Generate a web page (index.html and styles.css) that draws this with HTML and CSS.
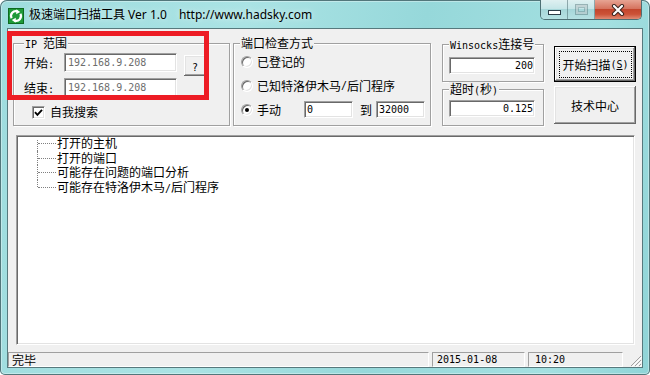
FILE: index.html
```html
<!DOCTYPE html>
<html lang="zh-CN">
<head>
    <meta charset="UTF-8">
    <title>极速端口扫描工具 Ver 1.0</title>
    <link rel="stylesheet" href="styles.css">
</head>
<body>
    <div class="window">
        <div class="titlebar">
            <svg class="app-icon" width="16" height="16" viewBox="0 0 16 16">
                <rect x="0.5" y="0.5" width="15" height="15" fill="#1e9a38" stroke="#0d6a20"/>
                <path d="M3.6 10.2 A4.8 4.8 0 0 1 9.4 3.4" fill="none" stroke="#fff" stroke-width="2.2"/>
                <path d="M8.4 1.3 L12.2 4 L8.2 6.2 Z" fill="#fff"/>
                <path d="M12.4 5.8 A4.8 4.8 0 0 1 6.6 12.6" fill="none" stroke="#fff" stroke-width="2.2"/>
                <path d="M7.6 14.7 L3.8 12 L7.8 9.8 Z" fill="#fff"/>
            </svg>
            <div class="title">极速端口扫描工具 Ver 1.0<span class="title-url">http://www.hadsky.com</span></div>
            <div class="caption">
                <div class="cap-btn cap-min"><span class="min-glyph"></span></div>
                <div class="cap-btn cap-max"><span class="max-glyph"></span></div>
                <div class="cap-btn cap-close">
                    <svg width="14" height="12" viewBox="0 0 14 12">
                        <path d="M3 2 L11 10 M11 2 L3 10" stroke="#3b2620" stroke-width="4.2" stroke-linecap="round"/>
                        <path d="M3 2 L11 10 M11 2 L3 10" stroke="#fff" stroke-width="2.2" stroke-linecap="round"/>
                    </svg>
                </div>
            </div>
        </div>

        <div class="client">
            <div class="top-row">
                <div class="group group-ip">
                    <span class="legend"><span class="en">IP </span>范围</span>
                    <div class="field-row">
                        <span class="field-label">开始<span class="en">:</span></span>
                        <input class="edit ip" value="192.168.9.208" readonly>
                        <button class="btn btn-help"><span class="en">?</span></button>
                    </div>
                    <div class="field-row">
                        <span class="field-label">结束<span class="en">:</span></span>
                        <input class="edit ip" value="192.168.9.208" readonly>
                    </div>
                    <div class="check-row">
                        <span class="check-box">
                            <svg width="9" height="9" viewBox="0 0 9 9">
                                <polyline points="1,4.2 3.4,6.8 8,1.8" fill="none" stroke="#000" stroke-width="1.9"/>
                            </svg>
                        </span>
                        <span class="check-text">自我搜索</span>
                    </div>
                </div>

                <div class="group group-port">
                    <span class="legend">端口检查方式</span>
                    <div class="radio-row"><span class="radio"></span>已登记的</div>
                    <div class="radio-row"><span class="radio"></span>已知特洛伊木马<span class="en">/</span>后门程序</div>
                    <div class="radio-row">
                        <span class="radio"><span class="radio-dot"></span></span>手动
                        <input class="edit port port-from" value="0">
                        <span class="port-to">到</span>
                        <input class="edit port" value="32000">
                    </div>
                </div>

                <div class="col-net">
                    <div class="group group-winsock">
                        <span class="legend"><span class="en">Winsocks</span>连接号</span>
                        <input class="edit num" value="200">
                    </div>
                    <div class="group group-timeout">
                        <span class="legend">超时<span class="en">(</span>秒<span class="en">)</span></span>
                        <input class="edit num" value="0.125">
                    </div>
                </div>

                <div class="col-btn">
                    <button class="btn btn-default"><span class="focus-ring">开始扫描<span class="en">(<u>S</u>)</span></span></button>
                    <button class="btn btn-tech">技术中心</button>
                </div>
            </div>

            <div class="tree">
                <div class="tree-item">打开的主机</div>
                <div class="tree-item">打开的端口</div>
                <div class="tree-item">可能存在问题的端口分析</div>
                <div class="tree-item">可能存在特洛伊木马<span class="en">/</span>后门程序</div>
            </div>

            <div class="statusbar">
                <div class="panel panel-msg">完毕</div>
                <div class="panel panel-date en">2015-01-08</div>
                <div class="panel panel-time en">10:20</div>
                <svg class="grip" width="12" height="12" viewBox="0 0 12 12">
                    <path d="M11 1 L1 11 M11 5 L5 11 M11 9 L9 11" stroke="#a0a0a0" stroke-width="1"/>
                    <path d="M12 2 L2 12 M12 6 L6 12 M12 10 L10 12" stroke="#fff" stroke-width="1"/>
                </svg>
            </div>
        </div>

        <div class="mark"></div>
    </div>
</body>
</html>
```

FILE: styles.css
```css
* {
    box-sizing: border-box;
}
body {
    margin: 0;
    background: #fff;
    color: #000;
    font-family: "Noto Sans CJK SC", sans-serif;
    font-size: 12px;
}
.en {
    font-family: "DejaVu Sans Mono", monospace;
    font-size: 10px;
}

/* window frame */
.window {
    position: relative;
    width: 650px;
    height: 375px;
    padding: 0 7px 7px;
    display: flex;
    flex-direction: column;
    border-radius: 7px 7px 5px 5px;
    background: linear-gradient(100deg, #9edcde 0%, #aae3e4 35%, #96d8da 60%, #a4e0e1 85%, #8fd4d7 100%);
    box-shadow: inset 0 0 0 1px #52777b, inset 0 0 0 2px rgba(255, 255, 255, 0.35);
}
.titlebar {
    height: 28px;
    flex-shrink: 0;
    display: flex;
    align-items: flex-start;
}
.app-icon {
    margin: 8px 0 0 1px;
    flex-shrink: 0;
}
.title {
    margin: 7px 0 0 5px;
    line-height: 16px;
    font-family: "Noto Sans", "Noto Sans CJK SC", sans-serif;
    font-size: 12px;
    white-space: nowrap;
    text-shadow: 0 0 6px rgba(255, 255, 255, 0.8);
}
.title-url {
    margin-left: 12px;
}
.caption {
    margin-left: auto;
    margin-right: 1px;
    display: flex;
    height: 20px;
    border: 1px solid #4d6f74;
    border-top: 0;
    border-radius: 0 0 5px 5px;
    overflow: hidden;
}
.cap-btn {
    height: 100%;
    display: flex;
    align-items: center;
    justify-content: center;
}
.cap-min, .cap-max {
    width: 27px;
    background: linear-gradient(#dff0f1, #c6e6e8 45%, #a6d6d9 50%, #b6e1e3 100%);
    border-right: 1px solid rgba(70, 100, 105, 0.5);
}
.cap-close {
    width: 46px;
    background: linear-gradient(#e7a493, #d6745f 45%, #c3462d 50%, #cc5237 75%, #e08b74 100%);
}
.min-glyph {
    width: 13px;
    height: 5px;
    margin-top: 6px;
    background: #fff;
    border: 1px solid #2d3d48;
}
.max-glyph {
    width: 13px;
    height: 11px;
    border: 1px solid rgba(80, 110, 115, 0.45);
    box-shadow: inset 0 0 0 2px rgba(255, 255, 255, 0.35), inset 0 0 0 3px rgba(80, 110, 115, 0.35);
}

/* client area */
.client {
    flex: 1;
    min-height: 0;
    display: flex;
    flex-direction: column;
    background: #f0f0f0;
    border: 1px solid #57797d;
}
.top-row {
    display: flex;
    align-items: flex-start;
    padding: 14px 0 0 5px;
}
.group {
    position: relative;
    border: 1px solid #a0a0a0;
    box-shadow: inset 1px 1px #fff, 1px 1px #fff;
}
.legend {
    position: absolute;
    top: -8px;
    left: 6px;
    padding: 0 1px;
    line-height: 14px;
    white-space: nowrap;
    background: #f0f0f0;
}

/* sunken edit box */
.edit {
    margin: 0;
    height: 19px;
    padding: 0 2px;
    border: 1px solid;
    border-color: #a0a0a0 #fff #fff #a0a0a0;
    box-shadow: inset 1px 1px #696969, inset -1px -1px #e3e3e3;
    background: #fff;
    color: #000;
    font-family: "DejaVu Sans Mono", monospace;
    font-size: 10px;
    outline: none;
}
.btn {
    margin: 0;
    padding: 0;
    border: 0;
    background: #f0f0f0;
    color: #000;
    font-family: "Noto Sans CJK SC", sans-serif;
    font-size: 12px;
    box-shadow: inset -1px -1px #696969, inset 1px 1px #fff, inset -2px -2px #a0a0a0, inset 2px 2px #e3e3e3;
}

/* IP range */
.group-ip {
    width: 217px;
    height: 83px;
    padding: 9px 0 0 10px;
}
.group-ip .legend {
    left: 10px;
}
.field-row {
    display: flex;
    align-items: flex-start;
    height: 19px;
}
.field-row + .field-row {
    margin-top: 6px;
}
.field-label {
    width: 40px;
    line-height: 19px;
}
.edit.ip {
    width: 113px;
    padding-left: 3px;
    color: #6d6d6d;
}
.btn-help {
    width: 22px;
    height: 21px;
    margin: 2px 0 0 7px;
}
.check-row {
    display: flex;
    align-items: center;
    margin: 8px 0 0 8px;
    line-height: 14px;
}
.check-box {
    width: 13px;
    height: 13px;
    display: flex;
    align-items: center;
    justify-content: center;
    border: 1px solid;
    border-color: #a0a0a0 #fff #fff #a0a0a0;
    box-shadow: inset 1px 1px #696969, inset -1px -1px #e3e3e3;
    background: #fff;
}
.check-text {
    margin-left: 5px;
}

/* port mode */
.group-port {
    width: 198px;
    height: 83px;
    margin-left: 3px;
    padding: 9px 0 0 7px;
    display: flex;
    flex-direction: column;
    gap: 7px;
}
.radio-row {
    display: flex;
    align-items: center;
    height: 17px;
    white-space: nowrap;
}
.radio {
    width: 12px;
    height: 12px;
    margin-right: 4px;
    display: flex;
    align-items: center;
    justify-content: center;
    border-radius: 50%;
    border: 1px solid;
    border-color: #a0a0a0 #fff #fff #a0a0a0;
    box-shadow: inset 1px 1px #696969, inset -1px -1px #e3e3e3;
    background: #fff;
}
.radio-dot {
    width: 4px;
    height: 4px;
    border-radius: 50%;
    background: #000;
}
.edit.port {
    width: 49px;
    height: 17px;
}
.port-from {
    margin-left: 23px;
}
.port-to {
    margin: 0 4px 0 7px;
}

/* winsocks / timeout */
.col-net {
    width: 102px;
    margin: 1px 0 0 11px;
    display: flex;
    flex-direction: column;
}
.group-winsock {
    height: 38px;
    padding: 10px 0 0 6px;
}
.group-timeout {
    height: 37px;
    margin-top: 7px;
    padding: 8px 0 0 6px;
}
.edit.num {
    width: 86px;
    height: 17px;
    padding-right: 1px;
    text-align: right;
}

/* command buttons */
.col-btn {
    width: 82px;
    margin: 3px 0 0 10px;
    display: flex;
    flex-direction: column;
    gap: 4px;
}
.btn-default {
    height: 36px;
    padding: 4px 3px 3px 4px;
    border: 1px solid #000;
}
.focus-ring {
    height: 100%;
    display: flex;
    align-items: center;
    justify-content: center;
    border: 1px dotted #000;
}
.btn-tech {
    height: 38px;
}

/* result tree */
.tree {
    width: 619px;
    height: 210px;
    margin: 9px 0 0 8px;
    padding: 0 0 0 20px;
    border: 1px solid;
    border-color: #a0a0a0 #fff #fff #a0a0a0;
    box-shadow: inset 1px 1px #696969, inset -1px -1px #e3e3e3;
    background: #fff;
}
.tree-item {
    position: relative;
    height: 14.5px;
    line-height: 14.5px;
    padding-left: 20px;
    white-space: nowrap;
}
.tree-item::before {
    content: "";
    position: absolute;
    left: 0;
    top: 0;
    bottom: 0;
    border-left: 1px dotted #808080;
}
.tree-item:first-child::before {
    top: 4px;
}
.tree-item:last-child::before {
    bottom: auto;
    height: 7px;
}
.tree-item::after {
    content: "";
    position: absolute;
    left: 1px;
    top: 7px;
    width: 18px;
    border-top: 1px dotted #808080;
}

/* status bar */
.statusbar {
    display: flex;
    height: 15px;
    margin-top: 7px;
}
.panel {
    padding-left: 3px;
    line-height: 13px;
    white-space: nowrap;
    overflow: hidden;
    border: 1px solid;
    border-color: #a0a0a0 #fff #fff #a0a0a0;
}
.panel-msg {
    width: 421px;
}
.panel-date {
    width: 93px;
    margin-left: 3px;
    padding-left: 4px;
}
.panel-time {
    width: 95px;
    margin-left: 3px;
    padding-left: 6px;
}
.grip {
    margin-left: auto;
    align-self: flex-end;
}

/* red annotation box */
.mark {
    position: absolute;
    left: 7px;
    top: 31px;
    width: 202px;
    height: 69px;
    border: 5px solid #ed1c24;
}
```
